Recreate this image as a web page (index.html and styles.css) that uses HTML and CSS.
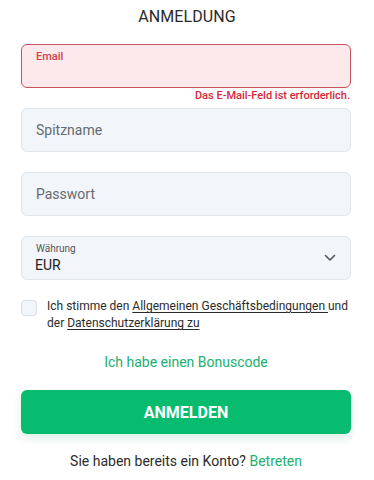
FILE: index.html
```html
<!DOCTYPE html>
<html lang="de">
<head>
<meta charset="utf-8">
<link rel="stylesheet" href="styles.css">
</head>
<body>
<div class="page">
  <h1 class="title">ANMELDUNG</h1>
  <div class="field field-error">
    <span class="float-label">Email</span>
  </div>
  <div class="error-msg">Das E-Mail-Feld ist erforderlich.</div>
  <div class="field"><span class="placeholder">Spitzname</span></div>
  <div class="field"><span class="placeholder">Passwort</span></div>
  <div class="field field-select">
    <div class="select-text">
      <span class="small-label">Währung</span>
      <span class="value">EUR</span>
    </div>
    <svg class="chevron" width="12" height="8" viewBox="0 0 12 8"><path d="M1.5 1.5 L6 6 L10.5 1.5" fill="none" stroke="#555" stroke-width="1.6" stroke-linecap="round" stroke-linejoin="round"/></svg>
  </div>
  <div class="terms">
    <span class="checkbox"></span>
    <p class="terms-text"><span>Ich stimme den</span> <u>Allgemeinen Geschäftsbedingungen </u><span>und</span> <span>der</span> <u>Datenschutzerklärung zu</u></p>
  </div>
  <div class="bonus">Ich habe einen Bonuscode</div>
  <button class="submit">ANMELDEN</button>
  <div class="login">Sie haben bereits ein Konto? <span class="link">Betreten</span></div>
</div>
</body>
</html>
```
FILE: styles.css
```css
html, body {
  margin: 0;
  padding: 0;
  background: #ffffff;
}
body {
  font-family: Roboto, "Liberation Sans", Arial, sans-serif;
  color: #2b2b2b;
}
.page {
  padding: 7px 23px 0 21px;
  display: flex;
  flex-direction: column;
}
.title {
  margin: 0;
  font-size: 16px;
  line-height: 20px;
  font-weight: 400;
  text-align: center;
  color: #2a2a2a;
  letter-spacing: 0.1px;
  padding-left: 2px;
}
.field {
  box-sizing: border-box;
  height: 44px;
  border: 1px solid #dfe5ec;
  border-radius: 6px;
  background: #f2f6fa;
  display: flex;
  align-items: center;
  padding: 0 14px;
  margin-top: 20px;
}
.field-error {
  margin-top: 17px;
  background: #fde8eb;
  border-color: #c9525f;
  align-items: flex-start;
}
.float-label {
  font-size: 11px;
  font-weight: 500;
  color: #d4404f;
  margin-top: 5px;
}
.error-msg {
  text-align: right;
  font-size: 11px;
  font-weight: 500;
  color: #d4283a;
  line-height: 14px;
  margin-top: 1px;
  margin-right: 1px;
  margin-bottom: -15px;
}
.placeholder {
  font-size: 14px;
  color: #666a70;
}
.field-select {
  justify-content: space-between;
}
.select-text {
  display: flex;
  flex-direction: column;
  margin-top: 1px;
}
.small-label {
  font-size: 10px;
  line-height: 12px;
  color: #555;
}
.value {
  font-size: 14px;
  line-height: 17px;
  color: #222;
  margin-top: 2px;
  margin-left: -1px;
}
.terms {
  display: flex;
  align-items: flex-start;
  margin-top: 20px;
}
.checkbox {
  box-sizing: border-box;
  width: 16px;
  height: 16px;
  flex: none;
  border: 1px solid #d6dde5;
  border-radius: 4px;
  background: #f2f6fa;
}
.terms-text {
  margin: -2px 0 0 10px;
  font-size: 12px;
  line-height: 17px;
  color: #2b2b2b;
}
.terms-text u {
  text-underline-offset: 2px;
}
.bonus {
  text-align: center;
  font-size: 14px;
  color: #22b06e;
  margin-top: 22px;
  line-height: 17px;
}
.submit {
  margin-top: 19px;
  height: 44px;
  border: none;
  border-radius: 6px;
  background: #08bc6f;
  color: #ffffff;
  font-family: inherit;
  font-size: 16px;
  font-weight: 700;
  box-shadow: 0 4px 10px rgba(8, 140, 80, 0.15);
  padding: 0;
}
.login {
  text-align: center;
  font-size: 14px;
  line-height: 17px;
  margin-top: 19px;
  color: #2b2b2b;
}
.link {
  color: #22b06e;
}
```
